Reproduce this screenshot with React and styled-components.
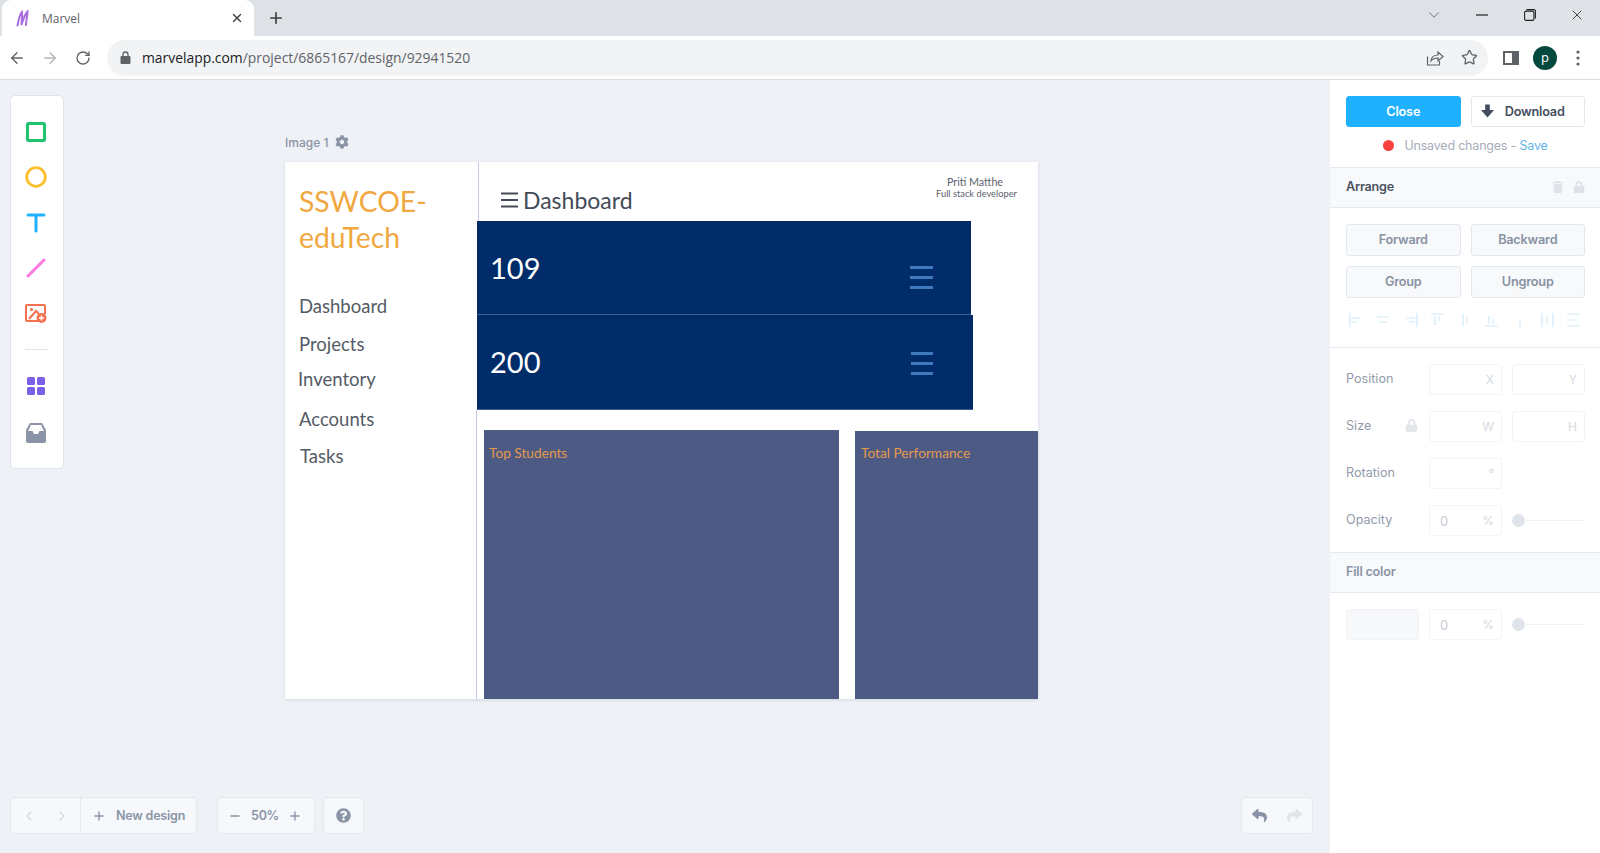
import styled, { createGlobalStyle } from 'styled-components';
import { ArrowLeft, ArrowRight, ChevronDown, ChevronLeft, ChevronRight, Minus, Plus, RotateCw, Star, X } from 'lucide-react';
import { FaCog, FaLock, FaQuestionCircle, FaReply, FaShare, FaTrash } from 'react-icons/fa';

const GlobalStyle = createGlobalStyle`
  * { box-sizing: border-box; }
  html, body { margin: 0; padding: 0; height: 100%; }
  body { font-family: Inter, "Liberation Sans", sans-serif; background: #eef1f6; overflow: hidden; }
`;

const Page = styled.div`
  display: flex;
  flex-direction: column;
  width: 1600px;
  height: 853px;
  overflow: hidden;
`;

/* browser chrome */
const TabStrip = styled.div`
  display: flex;
  align-items: flex-end;
  height: 36px;
  padding-left: 2px;
  background: #dee1e6;
  color: #3c4043;
`;

const Tab = styled.div`
  display: flex;
  align-items: center;
  width: 252px;
  height: 36px;
  padding: 0 10px 0 14px;
  gap: 10px;
  background: #fff;
  border-radius: 9px 9px 0 0;
`;

const TabTitle = styled.span`
  flex: 1;
  font-family: "Open Sans", sans-serif;
  font-size: 12px;
  color: #5f6368;
`;

const NewTab = styled.div`
  display: flex;
  margin: 0 auto 9px 13px;
  color: #3c4043;
`;

const WindowButton = styled.div`
  display: flex;
  align-items: center;
  justify-content: center;
  width: ${(p) => p.$w || 48}px;
  height: 18px;
  margin-bottom: 12px;
  color: ${(p) => p.$color || '#202124'};
`;

const AddressBar = styled.div`
  display: flex;
  align-items: center;
  height: 44px;
  padding-left: 8px;
  background: #fff;
  border-bottom: 1px solid #dadce0;
`;

const NavButton = styled.div`
  display: flex;
  justify-content: center;
  width: 18px;
  margin-right: 15px;
  color: ${(p) => p.$color || '#5f6368'};
`;

const Omnibox = styled.div`
  display: flex;
  align-items: center;
  width: 1381px;
  height: 36px;
  padding: 0 10px 0 13px;
  background: #f1f3f4;
  border-radius: 18px;
`;

const Url = styled.div`
  flex: 1;
  margin-left: 11px;
  font-family: "Open Sans", sans-serif;
  font-size: 13.9px;
  color: #5f6368;

  b {
    font-weight: 400;
    color: #202124;
  }
`;

const OmniIcon = styled.div`
  display: flex;
  margin-left: ${(p) => p.$ml || 15}px;
  color: #5f6368;
`;

const BarIcons = styled.div`
  display: flex;
  align-items: center;
  margin-left: 15px;
  gap: 14px;
`;

const Avatar = styled.div`
  display: flex;
  align-items: center;
  justify-content: center;
  width: 24px;
  height: 24px;
  margin-right: 5px;
  padding-bottom: 2px;
  border-radius: 50%;
  background: #04493d;
  color: #fff;
  font-family: "Open Sans", sans-serif;
  font-size: 13px;
`;

/* marvel editor */
const Workspace = styled.div`
  flex: 1;
  display: flex;
  min-height: 0;
`;

const Canvas = styled.main`
  flex: 1;
  display: flex;
  flex-direction: column;
  justify-content: space-between;
  background: #eef1f6;
`;

const CanvasTop = styled.div`
  display: flex;
  align-items: flex-start;
  padding: 15px 0 0 10px;
`;

const ToolRail = styled.div`
  display: flex;
  flex-direction: column;
  align-items: center;
  width: 54px;
  height: 374px;
  padding: 25px 2px 0 0;
  margin-right: 221px;
  background: #fff;
  border: 1px solid #dfe3ea;
  border-radius: 5px;
`;

const Tool = styled.div`
  display: flex;
  align-items: center;
  justify-content: center;
  width: 24px;
  height: 22px;
  margin-bottom: ${(p) => p.$mb ?? 24}px;
`;

const RailLine = styled.div`
  width: 23px;
  height: 1px;
  margin: -1px 0 25px;
  background: #dfe3ea;
`;

const ArtboardWrap = styled.div`
  margin-top: 37px;
`;

const Caption = styled.div`
  display: flex;
  align-items: center;
  height: 20px;
  margin-bottom: 10px;
  gap: 7px;
  font-size: 12px;
  font-weight: 500;
  color: #8a94a6;
`;

const Artboard = styled.div`
  display: flex;
  width: 753px;
  height: 537px;
  background: #fff;
  font-family: Lato, "Open Sans", sans-serif;
  box-shadow: 0 1px 3px rgba(60, 70, 100, 0.15);
`;

const Sidebar = styled.aside`
  width: 192px;
  padding: 21px 0 0 14px;
`;

const Brand = styled.div`
  margin-bottom: 40px;
  font-size: 28.3px;
  line-height: 36px;
  color: #f0a83f;
`;

const NavItem = styled.div`
  margin-left: ${(p) => p.$shift || 0}px;
  margin-bottom: ${(p) => p.$mb}px;
  font-size: 18.5px;
  line-height: 23px;
  color: #555b66;
`;

const Main = styled.div`
  flex: 1;
  display: flex;
  flex-direction: column;
  min-width: 0;
`;

const Topbar = styled.header`
  display: flex;
  justify-content: space-between;
  height: 59px;
  margin-left: 1px;
  padding: 16px 21px 0 22px;
  border-left: 1px solid #c8c4ec;
`;

const PageTitle = styled.div`
  display: flex;
  align-items: center;
  height: 44px;
  gap: 5px;
  font-size: 23px;
  color: #444b57;
`;

const Profile = styled.div`
  margin-top: -3px;
  font-size: 9.3px;
  line-height: 11px;
  text-align: right;
  color: #5b616c;

  strong {
    display: block;
    margin-right: 14px;
    font-size: 10.7px;
    line-height: 13px;
    font-weight: 400;
  }
`;

const StatCard = styled.section`
  display: flex;
  justify-content: space-between;
  width: ${(p) => p.$w}px;
  height: ${(p) => p.$h}px;
  padding: 0 ${(p) => p.$pr}px 0 13px;
  background: #002d69;
  border-bottom: 1px solid #3d5f8e;
  color: #fff;
`;

const StatValue = styled.div`
  padding-top: ${(p) => p.$top}px;
  font-size: 29px;
  line-height: 36px;
`;

const StatMenu = styled.div`
  display: flex;
  flex-direction: column;
  gap: 7px;
  width: ${(p) => p.$w}px;
  padding-top: ${(p) => p.$top}px;

  i {
    display: block;
    height: 3px;
    background: #3f7abf;
  }
`;

const Panels = styled.div`
  flex: 1;
  display: flex;
  align-items: stretch;
  gap: 16px;
  margin-left: -1px;
  padding: 20px 0 0 7px;
  border-left: 1px solid #c8c4ec;
`;

const ChartPanel = styled.section`
  flex: 0 0 ${(p) => p.$w}px;
  margin-top: ${(p) => p.$top || 0}px;
  padding: 14px 5px;
  background: #4d5b84;
  font-size: 13.7px;
  line-height: 17px;
  color: #e4994c;
`;

const ChartPanelWide = styled(ChartPanel)`
  padding: 13px 6px;
`;

/* bottom controls */
const CanvasBottom = styled.div`
  display: flex;
  align-items: center;
  padding: 0 17px 19px 10px;
`;

const ControlGroup = styled.div`
  display: flex;
  align-items: center;
  width: ${(p) => p.$w}px;
  height: 37px;
  margin-right: ${(p) => p.$mr || 0}px;
  margin-left: ${(p) => (p.$push ? 'auto' : 0)};
  padding: ${(p) => p.$pad || 0};
  justify-content: ${(p) => p.$justify || 'flex-start'};
  background: #f6f8fb;
  border: 1px solid #e3e7ee;
  border-radius: 4px;
  color: #8a94a6;
  font-size: 12.5px;
  font-weight: 600;
`;

const PagerPart = styled.div`
  display: flex;
  align-items: center;
  justify-content: space-around;
  width: 70px;
  height: 100%;
  padding: 0 2px;
  border-right: 1px solid #e3e7ee;
  color: #d4d9e2;
`;

const NewDesign = styled.div`
  display: flex;
  align-items: center;
  gap: 10px;
  padding-left: 11px;
  letter-spacing: -0.2px;
`;

const ZoomValue = styled.span`
  letter-spacing: -0.3px;
`;

/* right panel */
const Inspector = styled.aside`
  display: flex;
  flex-direction: column;
  flex: 0 0 270px;
  background: #fff;
  color: #8a94a6;
`;

const InspectorTop = styled.div`
  height: 87px;
  padding: 16px 15px 0 16px;
`;

const ButtonGrid = styled.div`
  display: grid;
  grid-template-columns: 1fr 1fr;
  gap: 10px;
  padding: ${(p) => p.$pad || 0};
`;

const Button = styled.div`
  display: flex;
  align-items: center;
  justify-content: center;
  gap: 11px;
  height: ${(p) => p.$h || 32}px;
  padding: ${(p) => p.$pad || '0 0 2px'};
  border-radius: 3px;
  font-size: 12.7px;
  font-weight: 600;
  letter-spacing: -0.2px;
  border: 1px solid ${(p) => (p.$primary ? '#1fb0ff' : '#e3e7ee')};
  background: ${(p) => (p.$primary ? '#1fb0ff' : p.$ghost ? '#fff' : '#f7f9fb')};
  color: ${(p) => (p.$primary ? '#fff' : p.$ghost ? '#454e60' : '#8992a3')};
`;

const Status = styled.div`
  display: flex;
  align-items: center;
  justify-content: center;
  gap: 10px;
  height: 20px;
  margin-top: 9px;
  padding-bottom: 1px;
  font-size: 12.5px;
  letter-spacing: -0.2px;
  color: #a5adba;

  a {
    color: #64b5ea;
  }
`;

const StatusDot = styled.span`
  width: 11px;
  height: 11px;
  border-radius: 50%;
  background: #f9423f;
`;

const SectionHead = styled.div`
  display: flex;
  align-items: center;
  justify-content: space-between;
  height: ${(p) => p.$h}px;
  padding: 0 15px 2px 16px;
  background: #f8f9fb;
  border-top: 1px solid #e6e9ef;
  border-bottom: 1px solid #e6e9ef;
  font-size: 12.6px;
  font-weight: 600;
  letter-spacing: -0.2px;
  color: ${(p) => p.$color};
`;

const HeadIcons = styled.div`
  display: flex;
  gap: 9px;
  color: #dfe3e9;
`;

const AlignRow = styled.div`
  display: flex;
  justify-content: space-between;
  padding: 15px 19px 0 19px;
  height: 50px;
  border-bottom: 1px solid #e6e9ef;
`;

const FieldRows = styled.div`
  display: flex;
  flex-direction: column;
  gap: 16px;
  padding: 16px 15px 16px 16px;
`;

const FieldRow = styled.div`
  display: grid;
  grid-template-columns: 73px 73px 73px;
  column-gap: 10px;
  align-items: center;
  height: 31px;
`;

const FieldLabel = styled.div`
  display: flex;
  align-items: center;
  justify-content: space-between;
  padding-bottom: 2px;
  font-size: 12.6px;
  color: #929bab;
`;

const Field = styled.div`
  display: flex;
  align-items: center;
  justify-content: space-between;
  height: 31px;
  padding: 0 7px 0 10px;
  border: 1px solid #f2f4f7;
  border-radius: 3px;
  font-size: 12px;
  color: #d5d9e0;
`;

const FieldValue = styled.span`
  font-size: 13px;
  color: #c6cbd4;
`;

const Swatch = styled.div`
  height: 31px;
  background: #f7f8fa;
  border: 1px solid #f1f3f6;
  border-radius: 3px;
`;

const Slider = styled.div`
  display: flex;
  align-items: center;

  span {
    width: 13px;
    height: 13px;
    border-radius: 50%;
    background: #dfe3ea;
  }

  i {
    flex: 1;
    height: 1px;
    background: #eff1f4;
  }
`;

const MarvelLogo = () => (
  <svg width="16" height="17" viewBox="0 0 16 17" fill="none" stroke="#a86ee0" strokeWidth="2" strokeLinecap="round">
    <path d="M1.500 15.500 C2.500 10 4 4 6 2 C6.500 6 5.500 11 5.500 15 C7 10 9 4 11.500 1.500 C11.500 6 10 11 10 15" />
  </svg>
);

const ShareIcon = () => (
  <svg width="18" height="18" viewBox="0 0 18 18" fill="none" stroke="#5f6368" strokeWidth="1.200">
    <path d="M1.500 7.500v8.500h12v-4" />
    <path d="M5 12c.4-4 3-6 7-6V3l5 4.500L12 12V9c-3 0-5.500 1-7 3z" />
  </svg>
);

const SidePanelIcon = () => (
  <svg width="16" height="14" viewBox="0 0 16 14">
    <path fillRule="evenodd" fill="#5f6368" d="M0 0h16v14H0zM2 2v10h7V2z" />
  </svg>
);

const Dots = () => (
  <svg width="4" height="16" viewBox="0 0 4 16" fill="#5f6368">
    <circle cx="2" cy="2" r="1.600" />
    <circle cx="2" cy="8" r="1.600" />
    <circle cx="2" cy="14" r="1.600" />
  </svg>
);

const RestoreIcon = () => (
  <svg width="12" height="12" viewBox="0 0 12 12" fill="none" stroke="#202124" strokeWidth="1.100">
    <rect x="0.600" y="2.100" width="9.300" height="9.300" rx="1.500" />
    <path d="M2.500 .6h7.400a1.500 1.500 0 0 1 1.500 1.500v7.400" />
  </svg>
);

const LockGlyph = () => (
  <svg width="11" height="13" viewBox="0 0 11 13" fill="#5f6368">
    <path d="M1.500 5h8a1 1 0 0 1 1 1v6a1 1 0 0 1-1 1h-8a1 1 0 0 1-1-1V6a1 1 0 0 1 1-1z" />
    <path d="M3 5V3.500a2.500 2.500 0 0 1 5 0V5" fill="none" stroke="#5f6368" strokeWidth="1.300" />
  </svg>
);

const DownloadGlyph = () => (
  <svg width="13" height="14" viewBox="0 0 14 14" fill="#454e60">
    <path d="M4.500 0h5v6H14L7 14 0 6h4.500z" />
  </svg>
);

const HamburgerGlyph = () => (
  <svg width="17" height="16" viewBox="0 0 17 16" stroke="#444b57" strokeWidth="2">
    <path d="M0 1.500h17M0 8h17M0 14.500h17" />
  </svg>
);

const ImageTool = () => (
  <svg width="22" height="20" viewBox="0 0 22 20" fill="none">
    <path d="M15 17H2a1 1 0 0 1-1-1V2a1 1 0 0 1 1-1h17a1 1 0 0 1 1 1v8" stroke="#f4714f" strokeWidth="2" />
    <circle cx="6.500" cy="5.500" r="1.600" fill="#f4714f" />
    <path d="M4 15l7-8 3 3" stroke="#f4714f" strokeWidth="2" />
    <circle cx="16.500" cy="14" r="5" fill="#f4714f" />
    <path d="M16.500 11.500v5M14 14h5" stroke="#fff" strokeWidth="1.500" />
  </svg>
);

const InboxTool = () => (
  <svg width="20" height="20" viewBox="0 0 20 20">
    <path
      fill="#8a94a6"
      fillRule="evenodd"
      d="M4 0h12l4 7v11a2 2 0 0 1-2 2H2a2 2 0 0 1-2-2V7zM5 2L2 8h4.500l1.500 3h4l1.500-3H18l-3-6z"
    />
  </svg>
);

const tools = [
  {
    key: 'rect',
    icon: (
      <svg width="20" height="20" viewBox="0 0 20 20" fill="none">
        <rect x="1.500" y="1.500" width="17" height="17" rx="1" stroke="#1fc46f" strokeWidth="3" />
      </svg>
    ),
  },
  {
    key: 'oval',
    icon: (
      <svg width="22" height="22" viewBox="0 0 22 22" fill="none">
        <circle cx="11" cy="11" r="9.300" stroke="#fcc02e" strokeWidth="2.800" />
      </svg>
    ),
  },
  {
    key: 'text',
    icon: (
      <svg width="20" height="20" viewBox="0 0 20 20" fill="none" stroke="#1fb0ff" strokeWidth="3" strokeLinecap="round">
        <path d="M2 2h16M10 2v16" />
      </svg>
    ),
  },
  {
    key: 'line',
    icon: (
      <svg width="20" height="20" viewBox="0 0 20 20" fill="none" stroke="#fb78e0" strokeWidth="3" strokeLinecap="round">
        <path d="M2 18L18 2" />
      </svg>
    ),
  },
];

const alignPaths = [
  'M1 0v14M3 5h8M3 9h5',
  'M1 4h12M3 9h8',
  'M13 0v14M2 5h9M5 9h6',
  'M0 1h13M4 3v9M8 3v5',
  'M5 1v12M9 4v6',
  'M0 13h13M4 3v8M8 6v5',
  'M7 6v8',
  'M2 0v14M13 0v14M7 3v8',
  'M0 1h13M0 13h13M2 7h9',
];

function AlignIcon({ d }) {
  return (
    <svg width="14" height="14" viewBox="0 0 14 14" fill="none" stroke="#cfe9f9" strokeWidth="1.200">
      <path d={d} />
    </svg>
  );
}

function FieldGrid({ label, lock, fields, slider }) {
  return (
    <FieldRow>
      <FieldLabel>
        {label}
        {lock && <FaLock size={13} color="#e2e5ea" style={{ marginRight: 1 }} />}
      </FieldLabel>
      {fields.map((f) => (
        <Field key={f.suffix}>
          <FieldValue>{f.value}</FieldValue>
          {f.suffix}
        </Field>
      ))}
      {slider && (
        <Slider>
          <span />
          <i />
        </Slider>
      )}
    </FieldRow>
  );
}

export default function App() {
  return (
    <Page>
      <GlobalStyle />
      <TabStrip>
        <Tab>
          <MarvelLogo />
          <TabTitle>Marvel</TabTitle>
          <X size={14} strokeWidth={2.400} color="#3c4043" />
        </Tab>
        <NewTab>
          <Plus size={18} strokeWidth={2.200} />
        </NewTab>
        <WindowButton $color="#5f6368">
          <ChevronDown size={18} strokeWidth={1.200} />
        </WindowButton>
        <WindowButton>
          <svg width="12" height="2" viewBox="0 0 12 2"><path d="M0 1h12" stroke="#202124" strokeWidth="1.200" /></svg>
        </WindowButton>
        <WindowButton>
          <RestoreIcon />
        </WindowButton>
        <WindowButton $w={46}>
          <X size={16} strokeWidth={1.200} />
        </WindowButton>
      </TabStrip>

      <AddressBar>
        <NavButton>
          <ArrowLeft size={18} strokeWidth={1.800} />
        </NavButton>
        <NavButton $color="#b4b7bb">
          <ArrowRight size={18} strokeWidth={1.800} />
        </NavButton>
        <NavButton>
          <RotateCw size={16} strokeWidth={2} />
        </NavButton>
        <Omnibox>
          <LockGlyph />
          <Url>
            <b>marvelapp.com</b>/project/6865167/design/92941520
          </Url>
          <OmniIcon>
            <ShareIcon />
          </OmniIcon>
          <OmniIcon $ml={17}>
            <Star size={17} strokeWidth={1.800} />
          </OmniIcon>
        </Omnibox>
        <BarIcons>
          <SidePanelIcon />
          <Avatar>p</Avatar>
          <Dots />
        </BarIcons>
      </AddressBar>

      <Workspace>
        <Canvas>
          <CanvasTop>
            <ToolRail>
              {tools.map((t) => (
                <Tool key={t.key}>{t.icon}</Tool>
              ))}
              <Tool $mb={26}>
                <ImageTool />
              </Tool>
              <RailLine />
              <Tool $mb={26}>
                <svg width="18" height="18" viewBox="0 0 18 18" fill="#7a5fe8">
                  <rect width="8" height="8" rx="1.500" />
                  <rect x="10" width="8" height="8" rx="1.500" />
                  <rect y="10" width="8" height="8" rx="1.500" />
                  <rect x="10" y="10" width="8" height="8" rx="1.500" />
                </svg>
              </Tool>
              <Tool>
                <InboxTool />
              </Tool>
            </ToolRail>

            <ArtboardWrap>
              <Caption>
                Image 1
                <FaCog size={14} />
              </Caption>
              <Artboard>
                <Sidebar>
                  <Brand>
                    SSWCOE-
                    <br />
                    eduTech
                  </Brand>
                  <NavItem $mb={15}>Dashboard</NavItem>
                  <NavItem $mb={12}>Projects</NavItem>
                  <NavItem $shift={-1} $mb={17}>Inventory</NavItem>
                  <NavItem $mb={14}>Accounts</NavItem>
                  <NavItem $shift={1} $mb={0}>Tasks</NavItem>
                </Sidebar>
                <Main>
                  <Topbar>
                    <PageTitle>
                      <HamburgerGlyph />
                      Dashboard
                    </PageTitle>
                    <Profile>
                      <strong>Priti Matthe</strong>
                      Full stack developer
                    </Profile>
                  </Topbar>
                  <StatCard $w={494} $h={94} $pr={38}>
                    <StatValue $top={29}>109</StatValue>
                    <StatMenu $w={23} $top={45}>
                      <i />
                      <i />
                      <i />
                    </StatMenu>
                  </StatCard>
                  <StatCard $w={496} $h={95} $pr={40}>
                    <StatValue $top={29}>200</StatValue>
                    <StatMenu $w={22} $top={37}>
                      <i />
                      <i />
                      <i />
                    </StatMenu>
                  </StatCard>
                  <Panels>
                    <ChartPanel $w={355}>Top Students</ChartPanel>
                    <ChartPanelWide $w={183} $top={1}>Total Performance</ChartPanelWide>
                  </Panels>
                </Main>
              </Artboard>
            </ArtboardWrap>
          </CanvasTop>

          <CanvasBottom>
            <ControlGroup $w={187} $mr={20}>
              <PagerPart>
                <ChevronLeft size={16} />
                <ChevronRight size={16} />
              </PagerPart>
              <NewDesign>
                <Plus size={14} strokeWidth={2.400} />
                New design
              </NewDesign>
            </ControlGroup>
            <ControlGroup $w={98} $mr={8} $justify="space-between" $pad="0 12px 0 10px">
              <Minus size={14} strokeWidth={2.400} />
              <ZoomValue>50%</ZoomValue>
              <Plus size={14} strokeWidth={2.400} />
            </ControlGroup>
            <ControlGroup $w={41} $justify="center">
              <FaQuestionCircle size={15} />
            </ControlGroup>
            <ControlGroup $w={72} $push $justify="space-around">
              <FaReply size={15} />
              <FaShare size={15} color="#dfe3ea" />
            </ControlGroup>
          </CanvasBottom>
        </Canvas>

        <Inspector>
          <InspectorTop>
            <ButtonGrid>
              <Button $primary $h={31} $pad="0 0 1px">Close</Button>
              <Button $ghost $h={31} $pad="0 10px 1px 0">
                <DownloadGlyph />
                Download
              </Button>
            </ButtonGrid>
            <Status>
              <StatusDot />
              <span>
                Unsaved changes - <a>Save</a>
              </span>
            </Status>
          </InspectorTop>

          <SectionHead $h={41} $color="#4a5262">
            Arrange
            <HeadIcons>
              <FaTrash size={12} />
              <FaLock size={12} />
            </HeadIcons>
          </SectionHead>
          <ButtonGrid $pad="16px 15px 0 16px">
            <Button>Forward</Button>
            <Button>Backward</Button>
            <Button>Group</Button>
            <Button>Ungroup</Button>
          </ButtonGrid>
          <AlignRow>
            {alignPaths.map((d) => (
              <AlignIcon key={d} d={d} />
            ))}
          </AlignRow>

          <FieldRows>
            <FieldGrid label="Position" fields={[{ suffix: 'X' }, { suffix: 'Y' }]} />
            <FieldGrid label="Size" lock fields={[{ suffix: 'W' }, { suffix: 'H' }]} />
            <FieldGrid label="Rotation" fields={[{ suffix: '°' }]} />
            <FieldGrid label="Opacity" fields={[{ value: '0', suffix: '%' }]} slider />
          </FieldRows>

          <SectionHead $h={41} $color="#8a94a6">Fill color</SectionHead>
          <FieldRows>
            <FieldRow>
              <Swatch />
              <Field>
                <FieldValue>0</FieldValue>%
              </Field>
              <Slider>
                <span />
                <i />
              </Slider>
            </FieldRow>
          </FieldRows>
        </Inspector>
      </Workspace>
    </Page>
  );
}
